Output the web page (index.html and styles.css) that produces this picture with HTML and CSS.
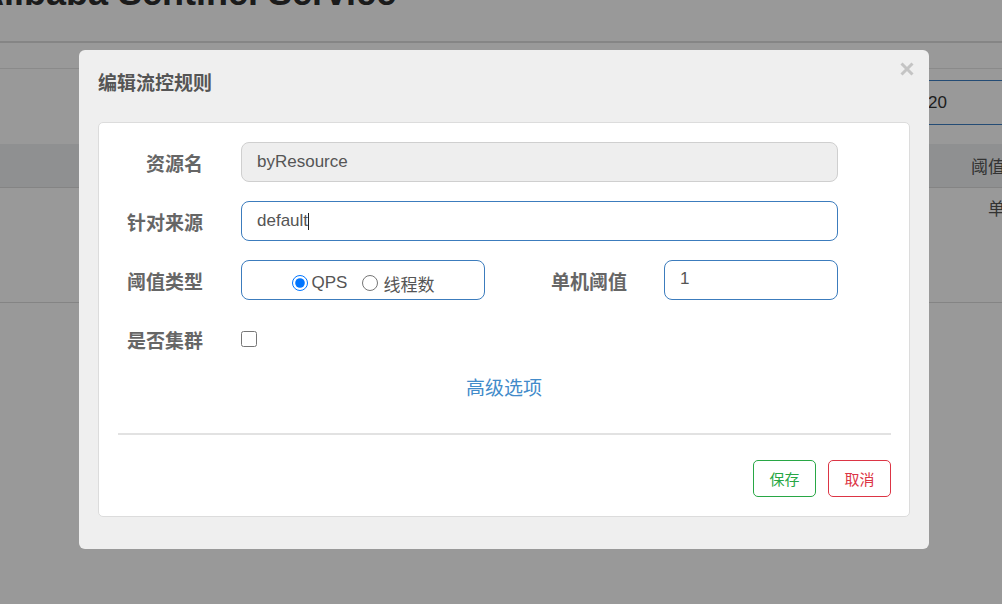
FILE: index.html
```html
<!DOCTYPE html>
<html lang="zh-CN">
<head>
<meta charset="utf-8">
<title>编辑流控规则</title>
<link rel="stylesheet" href="styles.css">
</head>
<body>
<div class="page">
  <header class="page-head"><h1 class="brand">Alibaba Sentinel Service</h1></header>
  <div class="subbar"></div>
  <div class="toolbar"><div class="page-size">20</div></div>
  <div class="table">
    <div class="thead">阈值类型</div>
    <div class="tbody">单机</div>
  </div>
</div>
<div class="backdrop"></div>
<div class="modal">
  <div class="modal-header">
    <h4 class="modal-title">编辑流控规则</h4>
    <button class="close" type="button" aria-label="关闭">
      <svg width="14" height="14" viewBox="0 0 14 14"><path d="M1.5 1.5 L12.5 12.5 M12.5 1.5 L1.5 12.5" stroke="#c4c4c4" stroke-width="3" stroke-linecap="butt"/></svg>
    </button>
  </div>
  <div class="modal-body">
    <div class="panel">
      <div class="row">
        <div class="lbl">资源名</div>
        <div class="field readonly">byResource</div>
      </div>
      <div class="row">
        <div class="lbl">针对来源</div>
        <div class="field active">default<span class="caret"></span></div>
      </div>
      <div class="row">
        <div class="lbl">阈值类型</div>
        <div class="radio-box">
          <label class="opt"><input type="radio" name="grade" checked><span>QPS</span></label>
          <label class="opt second"><input type="radio" name="grade"><span>线程数</span></label>
        </div>
        <div class="lbl lbl2">单机阈值</div>
        <div class="field active small">1</div>
      </div>
      <div class="row">
        <div class="lbl">是否集群</div>
        <input class="check" type="checkbox">
      </div>
      <div class="adv"><a class="adv-link">高级选项</a></div>
      <div class="divider"></div>
      <div class="footer">
        <button class="btn save" type="button">保存</button>
        <button class="btn cancel" type="button">取消</button>
      </div>
    </div>
  </div>
</div>
</body>
</html>
```
FILE: styles.css
```css
html, body {
  margin: 0;
  padding: 0;
}
body {
  width: 1002px;
  height: 604px;
  overflow: hidden;
  background: #fff;
  font-family: "Liberation Sans", "Noto Sans CJK SC", sans-serif;
  color: #333;
  position: relative;
}

/* background page */
.page {
  width: 1002px;
}
.page-head {
  height: 41px;
  overflow: hidden;
  border-bottom: 2px solid #dedede;
}
.brand {
  margin: -27px 0 0 -22px;
  font-size: 36px;
  line-height: 40px;
  font-weight: bold;
  color: #2e2e2e;
  white-space: nowrap;
}
.subbar {
  height: 25px;
  border-bottom: 1px solid #e6e6e6;
}
.toolbar {
  padding: 11px 0 19px;
}
.page-size {
  margin-left: 905px;
  width: 120px;
  height: 45px;
  box-sizing: border-box;
  border-top: 1px solid #3d7fc4;
  border-bottom: 1px solid #3d7fc4;
  padding-left: 23px;
  font-size: 17px;
  line-height: 43px;
  color: #333;
}
.table {
  font-family: "Noto Sans CJK SC", sans-serif;
  font-size: 17px;
  color: #555;
  white-space: nowrap;
}
.thead {
  height: 43px;
  line-height: 43px;
  padding-left: 971px;
  background: #eef0f2;
  border-bottom: 1px solid #dcdcdc;
}
.tbody {
  height: 114px;
  line-height: 40px;
  padding-left: 988px;
  border-bottom: 1px solid #dcdcdc;
}

.backdrop {
  position: fixed;
  inset: 0;
  background: rgba(0, 0, 0, 0.4);
}

/* modal */
.modal {
  position: absolute;
  left: 79px;
  top: 50px;
  width: 850px;
  height: 499px;
  box-sizing: border-box;
  background: #efefef;
  border-radius: 6px;
}
.modal-header {
  padding: 19px 19px 0;
}
.modal-title {
  margin: 0;
  font-family: "Noto Sans CJK SC", sans-serif;
  font-size: 19px;
  line-height: 26px;
  font-weight: bold;
  color: #555;
}
.close {
  position: absolute;
  right: 15px;
  top: 12px;
  width: 14px;
  height: 14px;
  padding: 0;
  border: 0;
  background: none;
  display: block;
}
.close svg {
  display: block;
}
.modal-body {
  padding: 27px 19px 0;
}
.panel {
  background: #fff;
  border: 1px solid #dcdcdc;
  border-radius: 5px;
  padding: 19px 0 19px;
}
.row {
  display: flex;
  align-items: center;
  height: 40px;
  margin-bottom: 19px;
}
.row:nth-child(4) {
  margin-bottom: 0;
}
.lbl {
  width: 104px;
  height: 40px;
  box-sizing: border-box;
  padding-top: 1px;
  margin-right: 38px;
  display: flex;
  align-items: center;
  justify-content: flex-end;
  font-family: "Noto Sans CJK SC", sans-serif;
  font-size: 19px;
  font-weight: bold;
  color: #666;
  white-space: nowrap;
}
.lbl2 {
  width: 142px;
  margin-right: 37px;
}
.field {
  width: 597px;
  height: 40px;
  box-sizing: border-box;
  border: 1px solid #ccc;
  border-radius: 8px;
  padding: 0 15px;
  display: flex;
  align-items: center;
  font-family: "Liberation Sans", "Noto Sans CJK SC", sans-serif;
  font-size: 17px;
  color: #555;
}
.field.readonly {
  background: #eee;
  border-color: #cfcfcf;
}
.field.active {
  border-color: #3c7cbd;
}
.field.small {
  width: 174px;
  padding-bottom: 2px;
}
.caret {
  display: inline-block;
  width: 1px;
  height: 17px;
  background: #222;
}
.radio-box {
  width: 244px;
  height: 40px;
  box-sizing: border-box;
  border: 1px solid #3c7cbd;
  border-radius: 8px;
  padding-top: 6px;
  display: flex;
  align-items: center;
  justify-content: center;
  font-size: 17px;
  color: #555;
}
.opt {
  display: flex;
  align-items: center;
}
.opt input {
  width: 16px;
  height: 16px;
  margin: 0 4px 0 0;
}
.opt.second {
  margin-left: 15px;
}
.opt.second input {
  margin-right: 5px;
}
.opt span {
  font-family: "Liberation Sans", "Noto Sans CJK SC", sans-serif;
}
.check {
  width: 16px;
  height: 16px;
  margin: 0;
}
.adv {
  margin-top: 15px;
  height: 26px;
  display: flex;
  align-items: center;
  justify-content: center;
}
.adv-link {
  display: block;
  font-family: "Noto Sans CJK SC", sans-serif;
  font-size: 19px;
  line-height: 26px;
  color: #428bca;
  cursor: pointer;
}
.divider {
  margin: 33px 18px 0 19px;
  height: 2px;
  background: #e2e2e2;
}
.footer {
  display: flex;
  justify-content: flex-end;
  gap: 12px;
  padding: 25px 18px 0 0;
}
.btn {
  width: 63px;
  height: 37px;
  box-sizing: border-box;
  border: 1px solid;
  border-radius: 5px;
  background: #fff;
  font-family: "Noto Sans CJK SC", sans-serif;
  font-size: 15px;
  padding: 0;
}
.btn.save {
  border-color: #28a745;
  color: #28a745;
}
.btn.cancel {
  border-color: #dc3545;
  color: #dc3545;
}
```
